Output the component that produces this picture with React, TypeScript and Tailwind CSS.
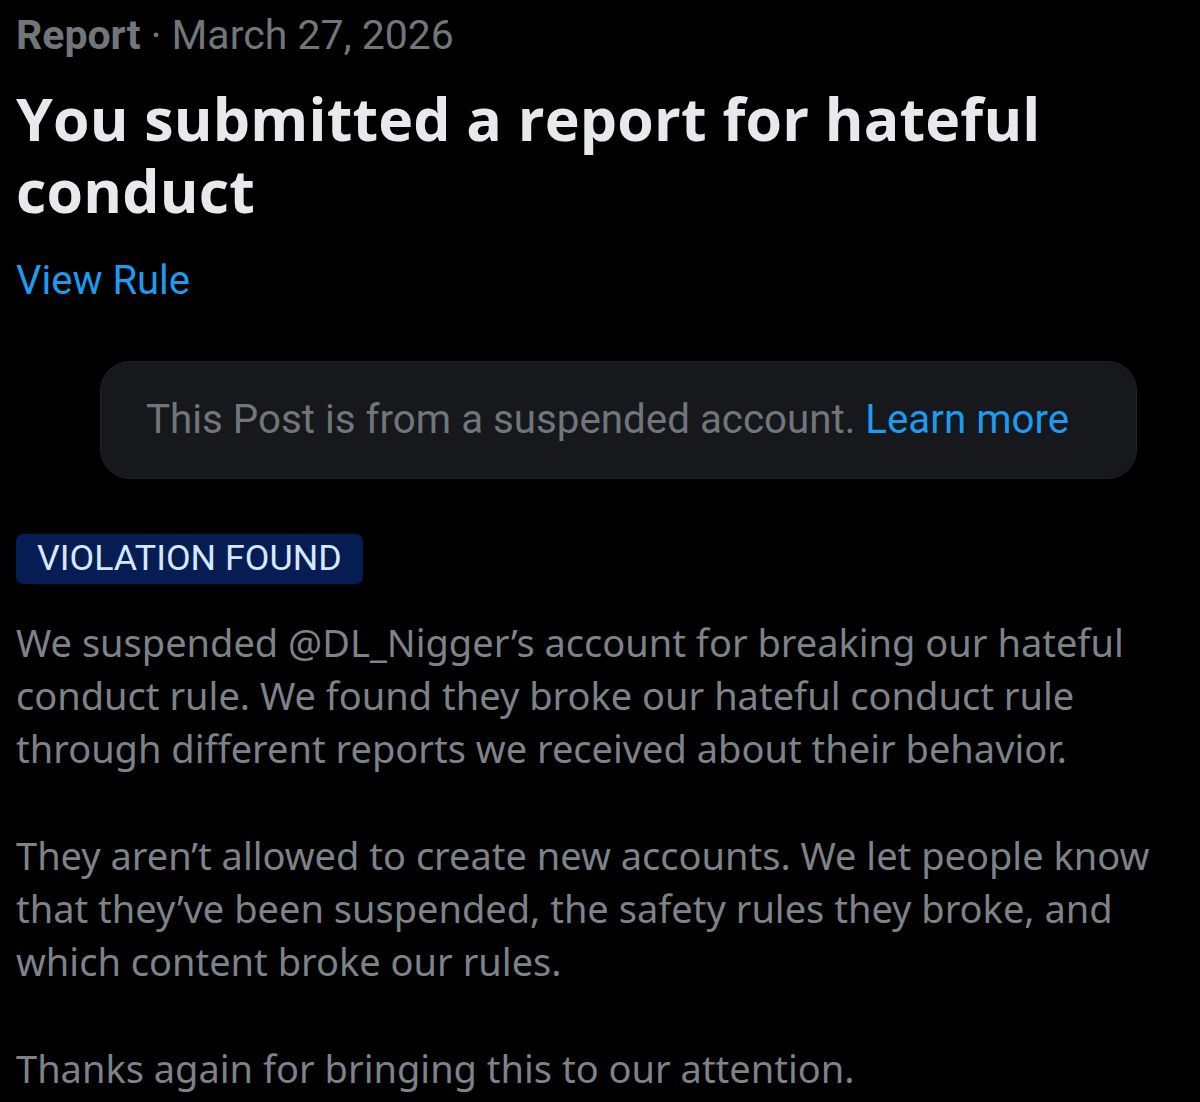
export default function App() {
  return (
    <div className="min-h-[1102px] w-[1200px] bg-black px-4 pt-[9px] font-['Noto_Sans',sans-serif]">
      {/* Header meta */}
      <div className="text-[41px] leading-[52px] text-[#71767b] font-['Roboto',sans-serif]">
        <span className="font-bold">Report</span>
        <span> · March 27, 2026</span>
      </div>

      {/* Title */}
      <h1 className="mt-[21px] w-[1120px] text-[59px] font-bold leading-[72px] tracking-[0.2px] text-[#e7e9ea] font-['Open_Sans',sans-serif]">
        You submitted a report for hateful conduct
      </h1>

      <div className="mt-[29px] text-[40px] leading-[52px] text-[#1d9bf0] font-['Roboto',sans-serif]">View Rule</div>

      {/* Suspended post notice */}
      <div className="mt-[54px] ml-[84px] flex h-[118px] w-[1037px] items-center rounded-[30px] border border-[#202327] bg-[#16181c] px-[45px] font-['Roboto',sans-serif] text-[40.3px] text-[#71767b]">
        <span>
          This Post is from a suspended account.{' '}
          <span className="text-[#1d9bf0]">Learn more</span>
        </span>
      </div>

      {/* Badge */}
      <div className="mt-[55px] inline-flex h-[50px] items-center rounded-[7px] bg-[#051d52] px-[21px] font-['Roboto',sans-serif] text-[35.8px] text-[#d6e8ff]">
        VIOLATION FOUND
      </div>

      {/* Body */}
      <div className="mt-[32px] w-[1172px] text-[38px] leading-[53px] text-[#7d8389]">
        <p>
          We suspended @DL_Nigger’s account for breaking our hateful conduct rule. We found they broke our hateful conduct rule
          through different reports we received about their behavior.
        </p>
        <p className="mt-[54px]">
          They aren’t allowed to create new accounts. We let people know that they’ve been suspended, the safety rules they broke, and
          which content broke our rules.
        </p>
        <p className="mt-[54px]">Thanks again for bringing this to our attention.</p>
      </div>
    </div>
  );
}
